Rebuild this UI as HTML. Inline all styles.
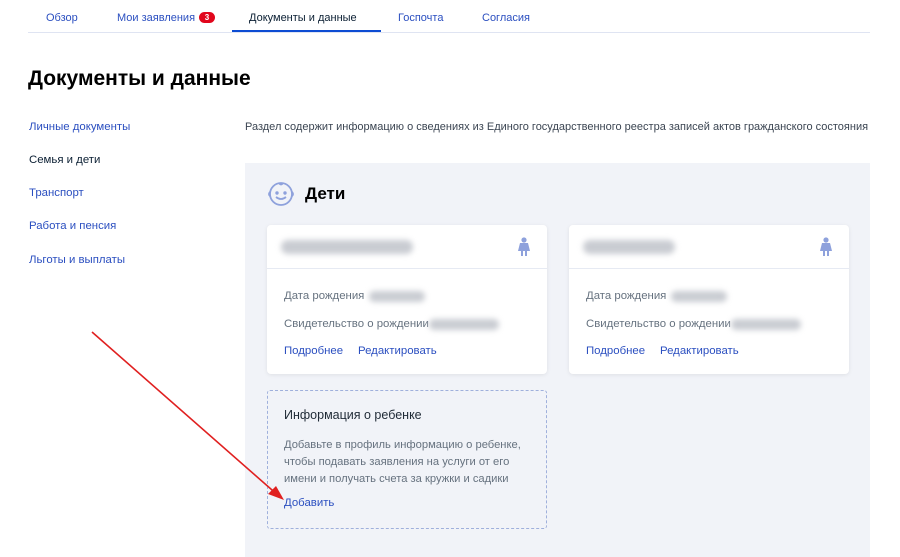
<!DOCTYPE html>
<html><head><meta charset="utf-8"><style>
*{margin:0;padding:0;box-sizing:border-box}
body{width:900px;height:557px;overflow:hidden;background:#fff;font-family:"Liberation Sans",sans-serif;color:#0b1f33;position:relative}
.a{position:absolute;white-space:nowrap}
.tab{font-size:11px;color:#2b4fc0;top:12px}
.lnk{color:#2b4fc0;font-size:11.4px}
.grey{color:#66727f;font-size:11.4px}
.blur{position:absolute;background:#c9ccd2;border-radius:8px;filter:blur(3px)}
.card{position:absolute;background:#fff;border-radius:4px;box-shadow:0 1px 4px rgba(0,0,0,.08);width:280px;height:149px;top:225px}
</style></head><body>
<div class="a tab" style="left:46px">Обзор</div>
<div class="a tab" style="left:117px">Мои заявления</div>
<div class="a" style="left:199px;top:12px;width:16px;height:11px;border-radius:6px;background:#e1061c;color:#fff;font-size:8px;font-weight:bold;text-align:center;line-height:11px">3</div>
<div class="a tab" style="left:249px;color:#0b1f33">Документы и данные</div>
<div class="a tab" style="left:398px">Госпочта</div>
<div class="a tab" style="left:482px">Согласия</div>
<div class="a" style="left:28px;top:32px;width:842px;height:1px;background:#dfe4f2"></div>
<div class="a" style="left:232px;top:30px;width:149px;height:2px;background:#0d4cd3"></div>
<div class="a" style="left:28px;top:67px;font-size:21px;font-weight:bold;color:#000">Документы и данные</div>
<div class="a lnk" style="left:29px;top:121px">Личные документы</div>
<div class="a" style="left:29px;top:154px;font-size:11.4px">Семья и дети</div>
<div class="a lnk" style="left:29px;top:187px">Транспорт</div>
<div class="a lnk" style="left:29px;top:220px">Работа и пенсия</div>
<div class="a lnk" style="left:29px;top:254px">Льготы и выплаты</div>
<div class="a" style="left:245px;top:121px;font-size:11px;color:#3b4552">Раздел содержит информацию о сведениях из Единого государственного реестра записей актов гражданского состояния</div>
<div class="a" style="left:245px;top:163px;width:625px;height:394px;background:#f1f3f8"></div>
<svg class="a" style="left:266px;top:178px" width="30" height="30" viewBox="0 0 30 30" fill="none" stroke="#8ea1dc" stroke-width="1.8"><circle cx="15" cy="16" r="11"/><path d="M10 19q5 4 10 0"/><circle cx="11" cy="15" r=".8" fill="#8ea1dc"/><circle cx="19" cy="15" r=".8" fill="#8ea1dc"/><path d="M13 5q2 3 4 0"/><path d="M4 14q-2 2 0 4M26 14q2 2 0 4"/></svg>
<div class="a" style="left:305px;top:184px;font-size:17px;font-weight:bold;color:#000">Дети</div>

<div class="card" style="left:267px">
<div class="blur" style="left:14px;top:15px;width:132px;height:14px"></div>
<svg class="a" style="left:251px;top:12px" width="12" height="19" viewBox="0 0 12 19" fill="#8ea1dc"><circle cx="6" cy="3" r="2.6"/><path d="M2 6h8l2 8H9v5H7v-5H5v5H3v-5H0z"/></svg>
<div class="a" style="left:0;top:43px;width:280px;height:1px;background:#e6eaf3"></div>
<div class="a grey" style="left:17px;top:65px">Дата рождения</div>
<div class="blur" style="left:102px;top:66px;width:56px;height:11px"></div>
<div class="a grey" style="left:17px;top:93px">Свидетельство о рождении</div>
<div class="blur" style="left:162px;top:94px;width:70px;height:11px"></div>
<div class="a lnk" style="left:17px;top:120px">Подробнее</div>
<div class="a lnk" style="left:91px;top:120px">Редактировать</div>
</div>

<div class="card" style="left:569px">
<div class="blur" style="left:14px;top:15px;width:92px;height:14px"></div>
<svg class="a" style="left:251px;top:12px" width="12" height="19" viewBox="0 0 12 19" fill="#8ea1dc"><circle cx="6" cy="3" r="2.6"/><path d="M2 6h8l2 8H9v5H7v-5H5v5H3v-5H0z"/></svg>
<div class="a" style="left:0;top:43px;width:280px;height:1px;background:#e6eaf3"></div>
<div class="a grey" style="left:17px;top:65px">Дата рождения</div>
<div class="blur" style="left:102px;top:66px;width:56px;height:11px"></div>
<div class="a grey" style="left:17px;top:93px">Свидетельство о рождении</div>
<div class="blur" style="left:162px;top:94px;width:70px;height:11px"></div>
<div class="a lnk" style="left:17px;top:120px">Подробнее</div>
<div class="a lnk" style="left:91px;top:120px">Редактировать</div>
</div>

<div class="a" style="left:267px;top:390px;width:280px;height:139px;border:1px dashed #9fb0dc;border-radius:3px"></div>
<div class="a" style="left:284px;top:408px;font-size:12.5px;color:#1f2a36">Информация о ребенке</div>
<div class="a grey" style="left:284px;top:437px;line-height:17px;font-size:11.2px">Добавьте в профиль информацию о ребенке,<br>чтобы подавать заявления на услуги от его<br>имени и получать счета за кружки и садики</div>
<div class="a lnk" style="left:284px;top:497px">Добавить</div>

<svg class="a" style="left:0;top:0" width="900" height="557"><line x1="92" y1="332" x2="280" y2="497" stroke="#e02020" stroke-width="1.6"/><path d="M284 500 L268 494 L276 486 Z" fill="#e02020"/></svg>
</body></html>
